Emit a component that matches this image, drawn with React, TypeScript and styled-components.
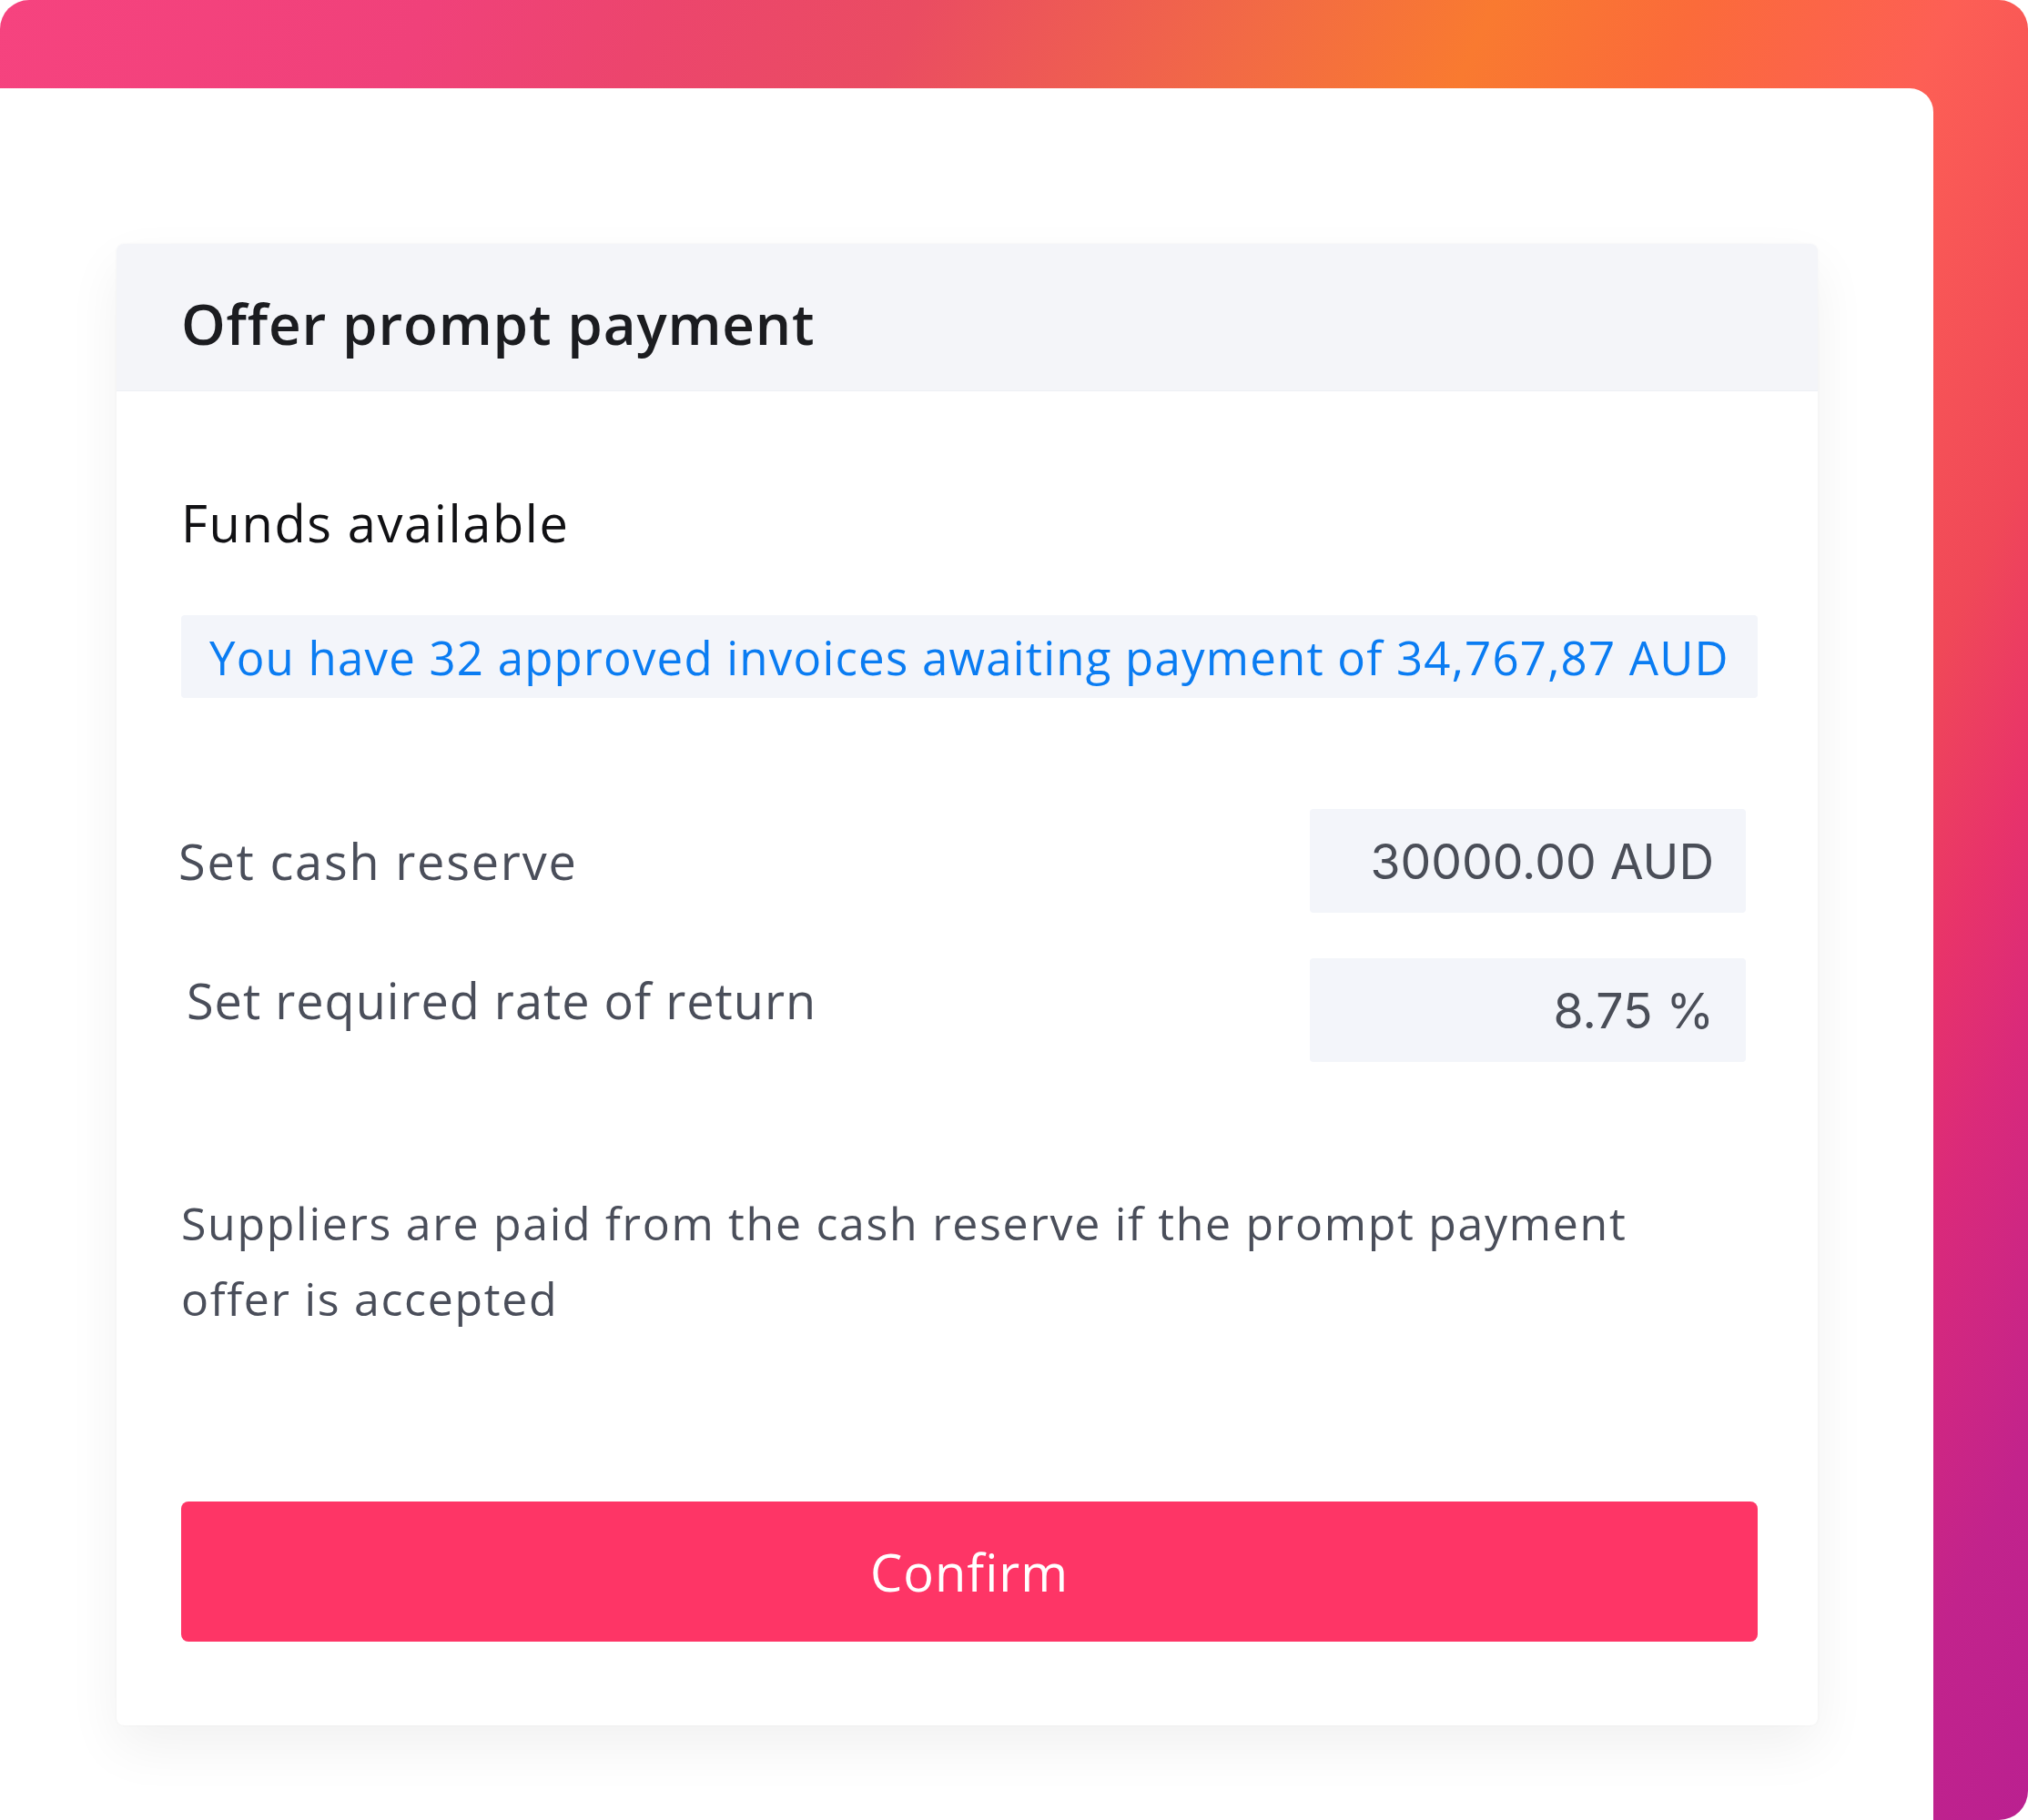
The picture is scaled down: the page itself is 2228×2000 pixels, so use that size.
import styled, { createGlobalStyle } from "styled-components"

const GlobalStyle = createGlobalStyle`
	html, body {
		margin: 0;
		padding: 0;
		background: #ffffff;
	}
	body {
		font-family: "Open Sans", "Noto Sans", sans-serif;
	}
`

const fields = [
	{ label: "Set cash reserve", value: "30000.00 AUD", nudge: 0 },
	{ label: "Set required rate of return", value: "8.75 %", nudge: 1 },
]

export default function App() {
	return (
		<>
			<GlobalStyle />
			<Frame>
				<Panel>
					<Card>
						<Header>
							<Title>Offer prompt payment</Title>
						</Header>
						<Body>
							<SectionTitle>Funds available</SectionTitle>
							<Notice>
								You have 32 approved invoices awaiting payment of 34,767,87 AUD
							</Notice>
							<Fields>
								{fields.map((f) => (
									<FieldRow key={f.label}>
										<FieldLabel $nudge={f.nudge}>{f.label}</FieldLabel>
										<ValueBox>{f.value}</ValueBox>
									</FieldRow>
								))}
							</Fields>
							<Note>
								Suppliers are paid from the cash reserve if the prompt payment
								offer is accepted
							</Note>
							<ConfirmButton type="button">Confirm</ConfirmButton>
						</Body>
					</Card>
				</Panel>
			</Frame>
		</>
	)
}

const Frame = styled.div`
	width: 2228px;
	height: 2000px;
	box-sizing: border-box;
	padding: 97px 104px 0 0;
	border-radius: 32px;
	display: flex;
	background: linear-gradient(
		115deg,
		#f6437f 0%,
		#f0417a 15%,
		#ec456d 23%,
		#ea4c62 32%,
		#f26a45 44%,
		#f97a30 52%,
		#fb6b3a 59%,
		#fd5f55 68%,
		#f04858 78%,
		#e8336a 83%,
		#da2a7a 87%,
		#c2238c 94%,
		#ba2090 100%
	);
`

const Panel = styled.div`
	flex: 1;
	background: #ffffff;
	border-top-right-radius: 26px;
	padding: 171px 0 0 128px;
`

const Card = styled.section`
	width: 1869px;
	background: #ffffff;
	border-radius: 8px;
	overflow: hidden;
	box-shadow: 0 0 3px rgba(0, 0, 0, 0.04), 0 24px 60px rgba(0, 0, 0, 0.06);
`

const Header = styled.header`
	height: 162px;
	box-sizing: border-box;
	padding: 12px 0 0 71px;
	display: flex;
	align-items: center;
	background: #f4f5f9;
	border-bottom: 1px solid #eef0f4;
`

const Title = styled.h1`
	margin: 0;
	font-size: 62px;
	font-weight: 600;
	color: #1b1c20;
	letter-spacing: 0.8px;
`

const Body = styled.div`
	padding: 0 66px 92px 71px;
	display: flex;
	flex-direction: column;
`

const SectionTitle = styled.h2`
	margin: 118px 0 0;
	font-size: 56px;
	line-height: 53px;
	font-weight: 500;
	letter-spacing: 1.6px;
	color: #111114;
`

const Notice = styled.div`
	margin-top: 75px;
	height: 91px;
	box-sizing: border-box;
	padding-left: 31px;
	display: flex;
	align-items: center;
	background: #f3f5fa;
	border-radius: 4px;
	font-size: 51px;
	font-weight: 500;
	letter-spacing: 1.2px;
	color: #0a7cf2;
	white-space: nowrap;
`

const Fields = styled.div`
	margin-top: 122px;
	margin-right: 13px;
	display: flex;
	flex-direction: column;
	gap: 50px;
`

const FieldRow = styled.div`
	display: flex;
	justify-content: space-between;
	align-items: center;
`

const FieldLabel = styled.span<{ $nudge: number }>`
	font-size: 54px;
	letter-spacing: ${(p) => (p.$nudge ? "1px" : "1.8px")};
	color: #4a4e5a;
	margin-left: ${(p) => (p.$nudge ? "6px" : "-3px")};
	margin-top: ${(p) => (p.$nudge ? "-22px" : "0")};
`

const ValueBox = styled.div`
	width: 479px;
	height: 114px;
	box-sizing: border-box;
	padding-right: 35px;
	display: flex;
	align-items: center;
	justify-content: flex-end;
	background: #f3f5fa;
	border-radius: 4px;
	font-family: Inter, "Open Sans", sans-serif;
	font-size: 53.5px;
	color: #4a4e58;
`

const Note = styled.p`
	margin: 136px 0 0;
	max-width: 1660px;
	font-size: 50px;
	line-height: 83px;
	letter-spacing: 1.7px;
	color: #4a4e5a;
`

const ConfirmButton = styled.button`
	margin-top: 181px;
	height: 154px;
	width: 100%;
	border: none;
	border-radius: 8px;
	background: #fe3566;
	color: #ffffff;
	font-family: "Open Sans", "Noto Sans", sans-serif;
	font-size: 56px;
	font-weight: 400;
	letter-spacing: 1px;
	cursor: pointer;
`
